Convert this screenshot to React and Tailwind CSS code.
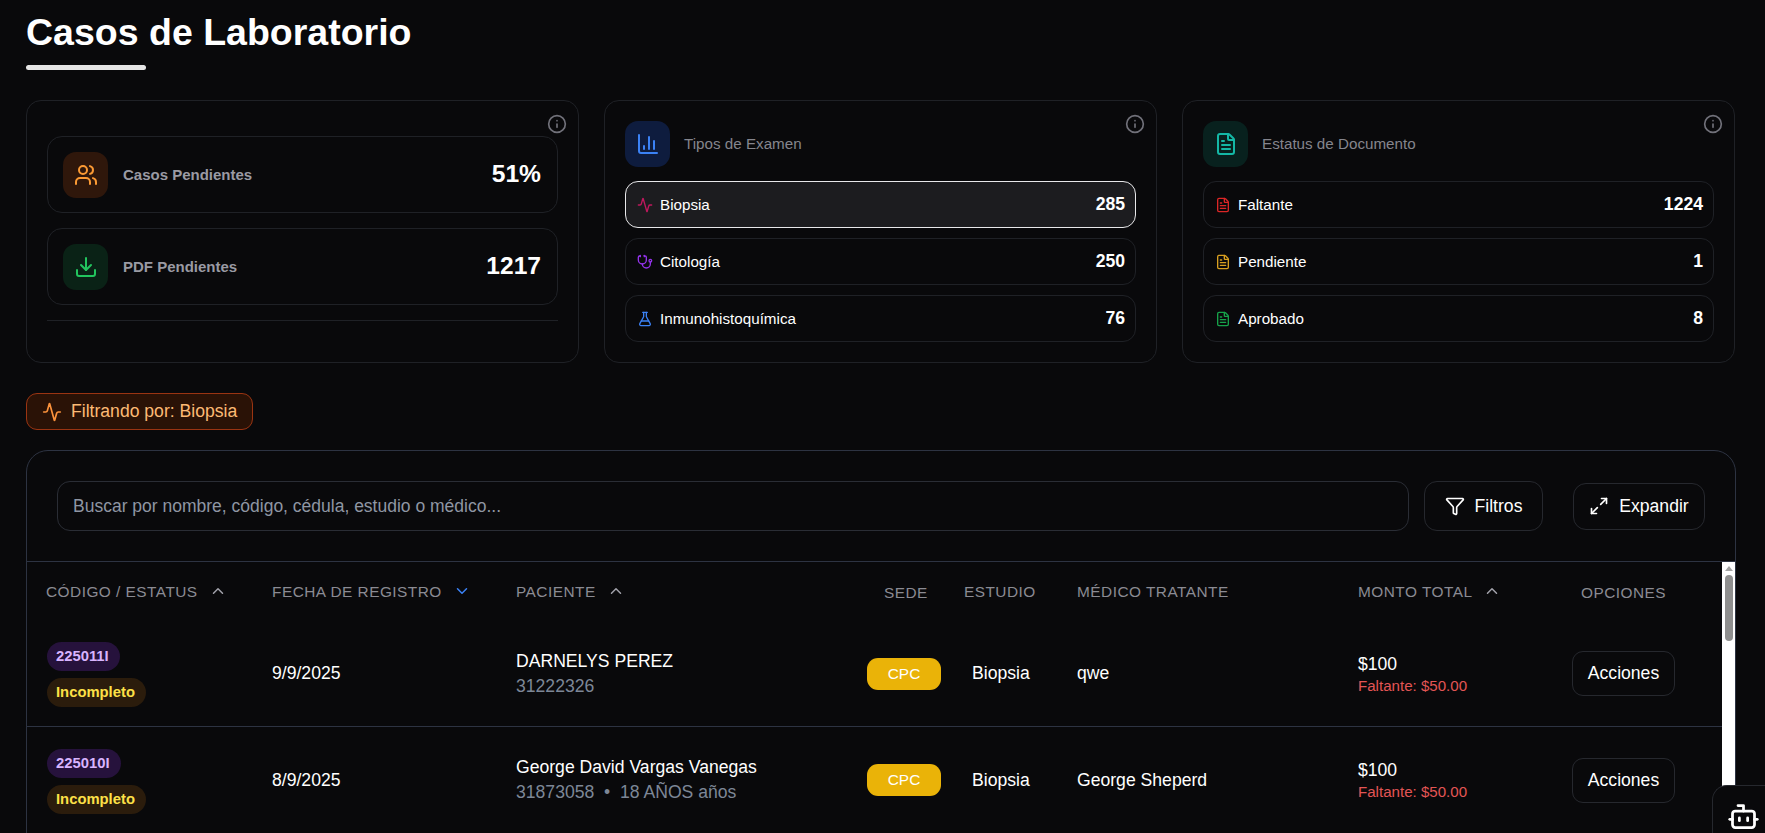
import React from 'react';
import {
  Users,
  Download,
  Info,
  ChartColumn,
  FileText,
  Activity,
  Stethoscope,
  FlaskConical,
  Funnel,
  Maximize2,
  ChevronUp,
  ChevronDown,
  Bot,
} from 'lucide-react';

const tipos = [
  { label: 'Biopsia', value: 285, Icon: Activity, color: 'text-[#be185d]', active: true },
  { label: 'Citología', value: 250, Icon: Stethoscope, color: 'text-[#9333ea]' },
  { label: 'Inmunohistoquímica', value: 76, Icon: FlaskConical, color: 'text-[#3b82f6]' },
];

const estatus = [
  { label: 'Faltante', value: 1224, Icon: FileText, color: 'text-[#dc2626]' },
  { label: 'Pendiente', value: 1, Icon: FileText, color: 'text-[#d9a020]' },
  { label: 'Aprobado', value: 8, Icon: FileText, color: 'text-[#16a34a]' },
];

const casos = [
  { code: '225011I', date: '9/9/2025', name: 'DARNELYS PEREZ', sub: '31222326', medico: 'qwe' },
  { code: '225010I', date: '8/9/2025', name: 'George David Vargas Vanegas', sub: '31873058  •  18 AÑOS años', medico: 'George Sheperd' },
];

const cols = 'grid grid-cols-[226px_244px_330px_118px_113px_281px_214px_103px] pl-[19px]';

const InfoIcon = () => (
  <Info size={20} strokeWidth={2} className="absolute right-[11px] top-[13px] text-[#71717a]" />
);

const StatRow = ({ Icon, iconClass, label, value }) => (
  <div className="flex h-[77px] items-center rounded-[15px] border border-[#1f2126] pl-[15px] pr-[16px]">
    <div className={`flex h-[46px] w-[45px] items-center justify-center rounded-[13px] ${iconClass}`}>
      <Icon size={24} strokeWidth={2} />
    </div>
    <span className="ml-[15px] flex-1 pt-[1px] text-[15px] font-bold text-[#9a9aa3]">{label}</span>
    <span className="text-[24.6px] font-bold text-white">{value}</span>
  </div>
);

const ListRow = ({ label, value, Icon, color, active }) => (
  <div className={`flex h-[47px] items-center rounded-[13px] border pl-[11px] pr-[10px] ${active ? 'border-[#e8e8ea] bg-[#1c1c1f]' : 'border-[#1f2126]'}`}>
    <Icon size={16} strokeWidth={2} className={color} />
    <span className="ml-[7px] flex-1 pt-[1px] text-[15.2px] text-white">{label}</span>
    <span className="text-[17.6px] font-bold text-white">{value}</span>
  </div>
);

const ListCard = ({ title, Icon, iconClass, rows }) => (
  <div className="relative h-[263px] rounded-[15px] border border-[#1f2126] px-[20px] pt-[20px]">
    <InfoIcon />
    <div className="flex items-center">
      <div className={`flex h-[46px] w-[45px] items-center justify-center rounded-[13px] ${iconClass}`}>
        <Icon size={24} strokeWidth={2} />
      </div>
      <span className="ml-[14px] text-[15.2px] text-[#85858d]">{title}</span>
    </div>
    <div className="mt-[14px] flex flex-col gap-[10px]">
      {rows.map((r) => (
        <ListRow key={r.label} {...r} />
      ))}
    </div>
  </div>
);

const HeadCell = ({ children, sort }) => (
  <div className="flex items-center text-[15.4px] tracking-[0.48px] text-[#8b8b93]">
    {children}
    {sort === 'up' && <ChevronUp size={18} className="ml-[11px] text-[#a1a1aa]" />}
    {sort === 'down' && <ChevronDown size={18} className="ml-[11px] text-[#3b82f6]" />}
  </div>
);

const CaseRow = ({ caso, last }) => (
  <div className={`${cols} h-[106px] items-center ${last ? '' : 'border-b border-[#2d3342]'}`}>
    <div className="flex flex-col items-start gap-[7px] pl-[1px] pt-[2px]">
      <span className="flex h-[29px] items-center rounded-full bg-[#26123c] pl-[9px] pr-[11px] text-[14.8px] font-bold text-[#d8b4fe]">{caso.code}</span>
      <span className="flex h-[29px] items-center rounded-full bg-[#2b1c0c] pl-[9px] pr-[11px] text-[14.8px] font-bold text-[#fde047]">Incompleto</span>
    </div>
    <div className="text-[17.6px] text-white">{caso.date}</div>
    <div>
      <div className="text-[17.6px] leading-[24px] text-white">{caso.name}</div>
      <div className="whitespace-pre text-[17.6px] leading-[26px] text-[#7d8797]">{caso.sub}</div>
    </div>
    <div className="pl-[21px]">
      <span className="flex h-[32px] w-[74px] items-center justify-center rounded-[11px] bg-[#eab308] text-[15.4px] text-white">CPC</span>
    </div>
    <div className="pl-[8px] text-[17.6px] text-white">Biopsia</div>
    <div className="text-[17.6px] text-white">{caso.medico}</div>
    <div>
      <div className="text-[17.6px] leading-[24px] text-white">$100</div>
      <div className="text-[15.1px] leading-[20px] text-[#e25555]">Faltante: $50.00</div>
    </div>
    <div className="flex h-[45px] items-center justify-center rounded-[11px] border border-[#26282e] text-[17.6px] text-white">Acciones</div>
  </div>
);

export default function App() {
  return (
    <div className="relative h-screen overflow-hidden bg-[#09090b] pl-[26px] pr-[29px] pt-[9px] font-['Liberation_Sans',Arial,sans-serif]">
      <h1 className="text-[37.5px] font-bold leading-[46px] text-white">Casos de Laboratorio</h1>
      <div className="mt-[10px] h-[5px] w-[120px] rounded-full bg-[#e5e5e5]" />

      <div className="mr-[1px] mt-[30px] grid grid-cols-3 gap-[25px]">
        <div className="relative h-[263px] rounded-[15px] border border-[#1f2126] px-[20px] pt-[35px]">
          <InfoIcon />
          <div className="flex flex-col gap-[15px]">
            <StatRow Icon={Users} iconClass="bg-[#2f170b] text-[#fb9a34]" label="Casos Pendientes" value="51%" />
            <StatRow Icon={Download} iconClass="bg-[#0a2216] text-[#22c55e]" label="PDF Pendientes" value="1217" />
          </div>
          <div className="mt-[15px] border-t border-[#1f2126]" />
        </div>
        <ListCard title="Tipos de Examen" Icon={ChartColumn} iconClass="bg-[#0e1c3e] text-[#3b82f6]" rows={tipos} />
        <ListCard title="Estatus de Documento" Icon={FileText} iconClass="bg-[#08211e] text-[#14b8a6]" rows={estatus} />
      </div>

      <div className="mt-[30px] inline-flex h-[37px] items-center rounded-[11px] border border-[#9a3412] bg-[#2a1206] pl-[15px] pr-[15px] text-[17.6px] text-[#fdba74]">
        <Activity size={20} strokeWidth={2} className="text-[#fb923c]" />
        <span className="ml-[9px]">Filtrando por: Biopsia</span>
      </div>

      <div className="mt-[20px] h-[520px] rounded-[22px] border border-[#2d3342]">
        <div className="flex h-[111px] items-center border-b border-[#2d3342] pl-[30px] pr-[30px]">
          <div className="flex h-[50px] flex-1 items-center rounded-[13px] border border-[#2a2d35] px-[15px] text-[17.5px] text-[#8f96a3]">
            Buscar por nombre, código, cédula, estudio o médico...
          </div>
          <div className="ml-[15px] flex h-[50px] w-[119px] items-center justify-center gap-[10px] rounded-[13px] border border-[#26282e] text-[17.6px] text-white">
            <Funnel size={20} strokeWidth={2} />
            Filtros
          </div>
          <div className="ml-[30px] flex h-[47px] w-[132px] items-center justify-center gap-[10px] rounded-[13px] border border-[#26282e] text-[17.6px] text-white">
            <Maximize2 size={20} strokeWidth={2} />
            Expandir
          </div>
        </div>
        <div className="flex">
          <div className="min-w-0 flex-1">
            <div className={`${cols} h-[59px] items-center`}>
              <HeadCell sort="up">CÓDIGO / ESTATUS</HeadCell>
              <HeadCell sort="down">FECHA DE REGISTRO</HeadCell>
              <HeadCell sort="up">PACIENTE</HeadCell>
              <div className="pl-[38px] pt-[3px]"><HeadCell>SEDE</HeadCell></div>
              <HeadCell>ESTUDIO</HeadCell>
              <HeadCell>MÉDICO TRATANTE</HeadCell>
              <HeadCell sort="up">MONTO TOTAL</HeadCell>
              <div className="flex justify-center pt-[3px]"><HeadCell>OPCIONES</HeadCell></div>
            </div>
            {casos.map((c, i) => (
              <CaseRow key={c.code} caso={c} last={i === casos.length - 1} />
            ))}
          </div>
          <div className="flex h-[330px] w-[13px] flex-col items-center bg-white">
            <div className="mt-[4px] h-0 w-0 border-x-[4px] border-b-[5px] border-x-transparent border-b-[#a3a3a3]" />
            <div className="mt-[4px] h-[66px] w-[8px] rounded-full bg-[#8f8f8f]" />
          </div>
        </div>
      </div>

      <div className="absolute -right-[9px] top-[785px] flex h-[60px] w-[62px] justify-center rounded-tl-[15px] border-l border-t border-[#26282e] bg-[#09090b] pt-[14px] text-white">
        <Bot size={33} strokeWidth={2} />
      </div>
    </div>
  );
}
